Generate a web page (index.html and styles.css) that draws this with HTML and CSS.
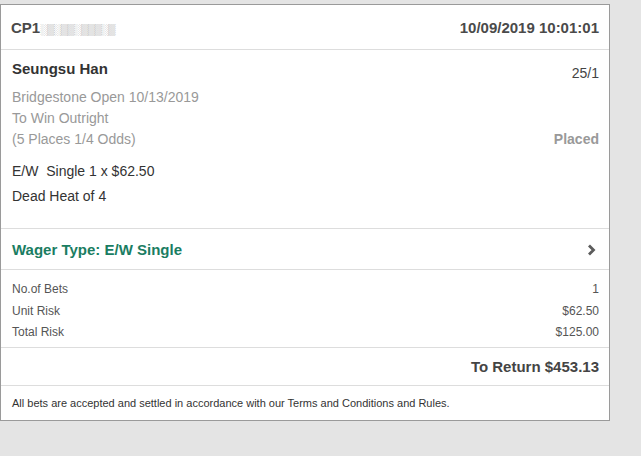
FILE: index.html
```html
<!DOCTYPE html>
<html lang="en">
<head>
<meta charset="UTF-8">
<meta name="viewport" content="width=device-width, initial-scale=1.0">
<title>Bet Receipt</title>
<link rel="stylesheet" href="styles.css">
</head>
<body>
  <div class="receipt">
    <div class="receipt-header">
      <span class="ticket-id">CP1<span class="masked">░▒░▒▒░▒▒▒░▒</span></span>
      <span class="placed-date">10/09/2019 10:01:01</span>
    </div>

    <div class="selection">
      <div class="row name-row">
        <span class="runner">Seungsu Han</span>
        <span class="odds">25/1</span>
      </div>
      <div class="meta">Bridgestone Open 10/13/2019</div>
      <div class="meta">To Win Outright</div>
      <div class="row meta">
        <span>(5 Places 1/4 Odds)</span>
        <span class="status">Placed</span>
      </div>
      <div class="bet-line stake">E/W&nbsp; Single 1 x $62.50</div>
      <div class="bet-line">Dead Heat of 4</div>
    </div>

    <div class="wager-type">
      <span>Wager Type: E/W Single</span>
      <svg class="chevron" width="9" height="12" viewBox="0 0 9 12">
        <polyline points="2,1.5 6.5,6 2,10.5" fill="none" stroke="#5c5c5c" stroke-width="2.8"/>
      </svg>
    </div>

    <div class="totals">
      <div class="row"><span>No.of Bets</span><span>1</span></div>
      <div class="row"><span>Unit Risk</span><span>$62.50</span></div>
      <div class="row"><span>Total Risk</span><span>$125.00</span></div>
    </div>

    <div class="to-return">To Return $453.13</div>

    <div class="footer">All bets are accepted and settled in accordance with our Terms and Conditions and Rules.</div>
  </div>
</body>
</html>
```

FILE: styles.css
```css
body, html {
  margin: 0;
  padding: 0;
  height: 100%;
  background-color: #e4e4e4;
  font-family: "Liberation Sans", Arial, sans-serif;
}

.receipt {
  margin-top: 4px;
  width: 608px;
  background-color: #fff;
  border: 1px solid #9a9a9a;
  color: #333;
}

.row {
  display: flex;
  justify-content: space-between;
}

.receipt-header {
  display: flex;
  justify-content: space-between;
  align-items: center;
  height: 44px;
  padding: 0 10px 0 10px;
  border-bottom: 1px solid #ddd;
  font-size: 15px;
  font-weight: bold;
  color: #4a4a4a;
}

.masked {
  font-size: 11px;
  letter-spacing: -1px;
  color: #9a9a9a;
}

.selection {
  padding: 9px 10px 19px 11px;
  border-bottom: 1px solid #ddd;
  font-size: 14px;
}

.name-row {
  line-height: 20px;
  margin-bottom: 4px;
}

.runner {
  font-size: 15px;
  font-weight: bold;
  color: #333;
}

.odds {
  padding-top: 4px;
  color: #444;
}

.meta {
  line-height: 21px;
  color: #999;
}

.status {
  font-weight: bold;
  color: #999;
}

.bet-line {
  line-height: 25px;
  color: #333;
}

.stake {
  margin-top: 9px;
}

.wager-type {
  display: flex;
  justify-content: space-between;
  align-items: center;
  height: 40px;
  padding: 0 13px 0 11px;
  border-bottom: 1px solid #ddd;
  font-size: 15px;
  font-weight: bold;
  color: #1a7d62;
}

.chevron {
  margin-top: 2px;
}

.totals {
  padding: 9px 10px 3px 11px;
  border-bottom: 1px solid #ddd;
  font-size: 12px;
  line-height: 21.5px;
  color: #555;
}

.to-return {
  height: 37px;
  line-height: 37px;
  padding: 0 10px;
  text-align: right;
  border-bottom: 1px solid #ddd;
  font-size: 15px;
  font-weight: bold;
  color: #444;
}

.footer {
  height: 34px;
  line-height: 34px;
  padding: 0 11px;
  font-size: 11px;
  color: #333;
}
```
